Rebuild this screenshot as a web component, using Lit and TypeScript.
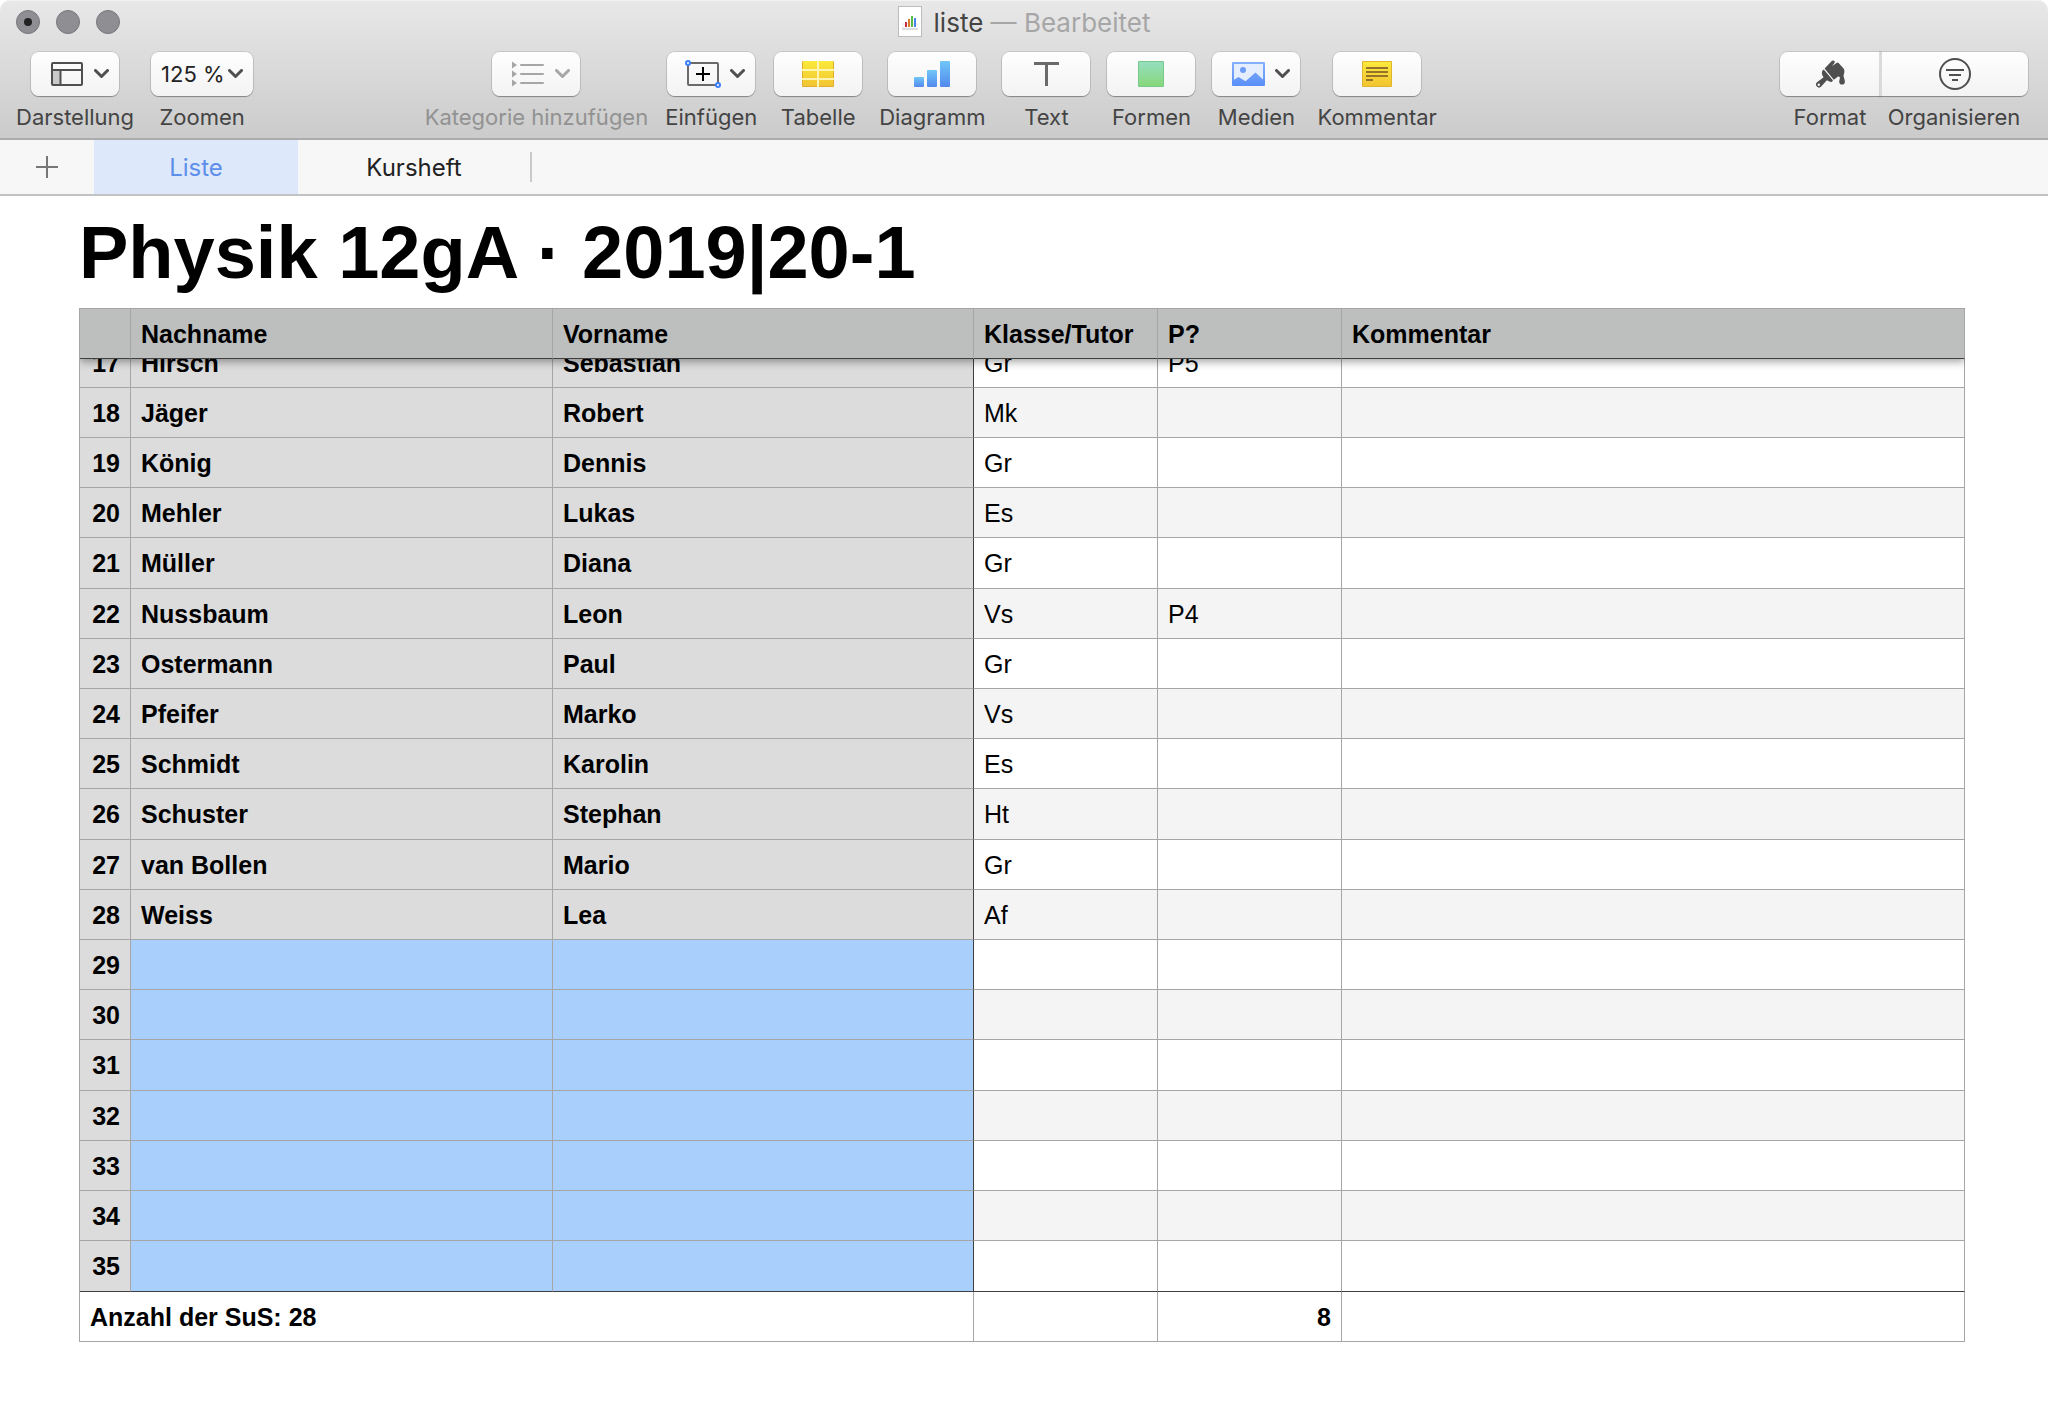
import { LitElement, html, svg, css, nothing, type TemplateResult } from "lit";
import { customElement, property, state } from "lit/decorators.js";
import { classMap } from "lit/directives/class-map.js";

type IconName =
  | "view"
  | "category"
  | "insert"
  | "table"
  | "chart"
  | "text"
  | "shape"
  | "media"
  | "comment"
  | "brush"
  | "organize";

const icons: Record<IconName, TemplateResult> = {
  view: svg`
    <rect x="2" y="12" width="7" height="15" fill="#c9c9c9" />
    <g fill="none" stroke="#4f4f4f" stroke-width="2">
      <rect x="1" y="5" width="30" height="22" rx="1" />
      <path d="M1 12H31M9.500 12V27" />
    </g>`,
  category: svg`
    <path d="M0 3.500L5 7L0 10.500ZM0 12.500L5 16L0 19.500ZM0 21.500L5 25L0 28.500Z" fill="#a6a6a6" />
    <path d="M9 7H31M9 16H31M9 25H31" stroke="#a6a6a6" stroke-width="2" stroke-linecap="round" />`,
  insert: svg`
    <rect x="1" y="5" width="30" height="22" rx="1" fill="none" stroke="#6a6a6a" stroke-width="2" />
    <path d="M9 16H23M16 9V23" stroke="#000" stroke-width="2" />
    <g fill="#fff" stroke="#3e80fa" stroke-width="2">
      <circle cx="1" cy="5" r="2" />
      <circle cx="31" cy="27" r="2" />
    </g>`,
  table: svg`
    <defs>
      <linearGradient id="g" x1="0" y1="0" x2="0" y2="1">
        <stop offset="0" stop-color="#fbea3b" /><stop offset="1" stop-color="#f2c432" />
      </linearGradient>
    </defs>
    <rect x="0" y="3" width="32" height="26" rx="1" fill="#e0ae2c" />
    <rect x="1" y="3" width="30" height="25" fill="url(#g)" />
    <path d="M0 12H32M0 21H32M16 3V29" stroke="#fff5b0" stroke-width="2" />`,
  chart: svg`
    <defs>
      <linearGradient id="g" x1="0" y1="0" x2="0" y2="1">
        <stop offset="0" stop-color="#71c6f7" /><stop offset="1" stop-color="#5189ed" />
      </linearGradient>
    </defs>
    <g fill="url(#g)">
      <rect x="-2" y="19" width="10" height="10" rx="1" />
      <rect x="11" y="12" width="10" height="17" rx="1" />
      <rect x="24" y="3" width="10" height="26" rx="1" />
    </g>`,
  text: svg`<path d="M4 4H29V7H18V28H15V7H4Z" fill="#6a6a6a" />`,
  shape: svg`
    <defs>
      <linearGradient id="g" x1="0" y1="0" x2="0" y2="1">
        <stop offset="0" stop-color="#95dfc0" /><stop offset="1" stop-color="#86d77a" />
      </linearGradient>
    </defs>
    <rect x="3" y="3" width="26" height="26" rx="1" fill="#79c98a" />
    <rect x="4" y="4" width="24" height="24" fill="url(#g)" />`,
  media: svg`
    <defs>
      <linearGradient id="g" x1="0" y1="0" x2="0" y2="1">
        <stop offset="0" stop-color="#86b0fb" /><stop offset="1" stop-color="#5a8ff8" />
      </linearGradient>
    </defs>
    <rect x="0" y="4" width="33" height="24" rx="1" fill="url(#g)" />
    <path d="M2 6H31V21.500L23.500 14.500L13.500 23.300L6.500 19L2 21.800Z" fill="#e5eeff" />
    <circle cx="11" cy="12" r="3" fill="#6d9cf8" />`,
  comment: svg`
    <defs>
      <linearGradient id="g" x1="0" y1="0" x2="0" y2="1">
        <stop offset="0" stop-color="#fbea3b" /><stop offset="1" stop-color="#f2c432" />
      </linearGradient>
    </defs>
    <rect x="1" y="3" width="30" height="26" rx="1" fill="#e0b52e" />
    <rect x="2" y="4" width="28" height="24" fill="url(#g)" />
    <path d="M5 10H27M5 14H27M5 18H27M5 22H12" stroke="#94722a" stroke-width="2" />`,
  brush: svg`
    <g fill="#4f4f4f">
      <path d="M10.600 10.400L18 2.800Q19.200 1.900 20.500 3Q21.300 4 20.300 5.200L18 8.200L22.800 4.800Q23.800 4.300 24.600 5.100L29.600 10.500Q30.900 12.200 30.300 14.500L29.500 17.800L30.800 22.800A2.900 2.900 0 1 1 25.300 22.800L26 19.500L24.400 18.200L19.800 21.800Z" />
      <path d="M8.300 12.700L9.800 11.500L19 22.600L17.700 23.900Q15.500 24 12.900 22.200L7.200 28.600A3 3 0 1 1 3 24.200L9.600 19.300Q7 16 8.300 12.700Z" />
    </g>
    <circle cx="4.800" cy="26.800" r="1.200" fill="#f8f8f8" />`,
  organize: svg`
    <g fill="none" stroke="#4f4f4f" stroke-width="2">
      <circle cx="16" cy="16" r="15" />
      <path d="M7 12H25M10 17H22M13 22H19" />
    </g>`,
};

@customElement("tool-icon")
export class ToolIcon extends LitElement {
  @property() name: IconName = "view";

  static styles = css`
    :host {
      display: block;
      flex: none;
    }
    .glyph {
      display: block;
      overflow: visible;
    }
  `;

  render() {
    return html`<svg class="glyph" width="32" height="32" viewBox="0 0 32 32" aria-hidden="true">
      ${icons[this.name]}
    </svg>`;
  }
}

interface Tool {
  label: string;
  icon: IconName;
  menu?: boolean;
  disabled?: boolean;
}

const contentTools: Tool[] = [
  { label: "Kategorie hinzufügen", icon: "category", menu: true, disabled: true },
  { label: "Einfügen", icon: "insert", menu: true },
  { label: "Tabelle", icon: "table" },
  { label: "Diagramm", icon: "chart" },
  { label: "Text", icon: "text" },
  { label: "Formen", icon: "shape" },
  { label: "Medien", icon: "media", menu: true },
  { label: "Kommentar", icon: "comment" },
];

const chevron = html`<svg class="chevron" width="15" height="10" viewBox="0 0 15 10" aria-hidden="true">
  <path d="M1.500 1.500L7.500 7.500L13.500 1.500" fill="none" stroke="currentColor" stroke-width="3" stroke-linecap="round" stroke-linejoin="round" />
</svg>`;

@customElement("app-toolbar")
export class AppToolbar extends LitElement {
  static styles = css`
    :host {
      display: block;
      color: #444;
      font-family: Inter, "Liberation Sans", sans-serif;
      border-radius: 10px 10px 0 0;
      border-bottom: 2px solid #acacac;
      background: linear-gradient(#e8e8e8, #cbcbcb);
      box-shadow: inset 0 1px 0 #f3f3f3;
    }
    .titlebar {
      display: grid;
      grid-template-columns: 1fr auto 1fr;
      align-items: center;
      height: 44px;
      padding: 0 16px;
    }
    .lights {
      display: flex;
      gap: 16px;
    }
    .light {
      display: grid;
      place-items: center;
      box-sizing: border-box;
      width: 24px;
      height: 24px;
      padding: 0;
      border: 1px solid #77767b;
      border-radius: 50%;
      background: #8f8e93;
    }
    .unsaved {
      width: 8px;
      height: 8px;
      border-radius: 50%;
      background: #222;
    }
    .title {
      display: flex;
      align-items: center;
      gap: 12px;
      font-size: 26px;
      line-height: 32px;
      white-space: pre;
    }
    .name {
      padding-top: 2px;
    }
    .state {
      color: #a6a6a6;
    }
    .tools {
      display: flex;
      padding: 8px 20px 7px 16px;
    }
    .group {
      display: flex;
      gap: 17px;
    }
    .near {
      flex: 1;
    }
    .far {
      flex: 2;
    }
    .item {
      display: flex;
      flex-direction: column;
      align-items: center;
      gap: 7px;
      padding: 0;
      border: 0;
      background: none;
      color: inherit;
      font: inherit;
      font-size: 22px;
      line-height: 28px;
      white-space: nowrap;
    }
    .item:disabled {
      color: #929292;
    }
    .face {
      display: flex;
      align-items: center;
      justify-content: center;
      box-sizing: border-box;
      min-width: 88px;
      height: 44px;
      border-radius: 8px;
      background: linear-gradient(#fefefe, #f3f3f3);
      box-shadow: 0 0 0 1px rgba(0, 0, 0, 0.1), 0 1px 1px rgba(0, 0, 0, 0.3);
    }
    .menu {
      justify-content: space-between;
      padding: 0 10px 0 20px;
    }
    .chevron {
      flex: none;
      color: #4f4f4f;
    }
    .item:disabled .chevron {
      color: #a6a6a6;
    }
    .zoom {
      gap: 4px;
      width: 102px;
      padding: 0 10px;
      justify-content: space-between;
    }
    .level {
      appearance: none;
      flex: 1;
      min-width: 0;
      padding: 0;
      border: 0;
      background: none;
      color: #222;
      font: inherit;
    }
    .segments {
      display: flex;
    }
    .segments .face {
      width: 100px;
      border-radius: 8px 0 0 8px;
    }
    .segments .last .face {
      width: 148px;
      border-left: 2px solid #dadada;
      border-radius: 0 8px 8px 0;
    }
  `;

  private tool(t: Tool) {
    return html`<button class="item" type="button" ?disabled=${t.disabled} aria-haspopup=${t.menu ? "menu" : nothing}>
      <span class=${classMap({ face: true, menu: !!t.menu })}>
        <tool-icon name=${t.icon}></tool-icon>
        ${t.menu ? chevron : nothing}
      </span>
      <span>${t.label}</span>
    </button>`;
  }

  render() {
    return html`
      <header class="titlebar">
        <div class="lights">
          <button class="light" type="button" aria-label="Schließen"><span class="unsaved"></span></button>
          <button class="light" type="button" aria-label="Minimieren"></button>
          <button class="light" type="button" aria-label="Vergrößern"></button>
        </div>
        <div class="title">
          <svg width="24" height="32" viewBox="0 0 24 32" aria-hidden="true">
            <rect x="0.500" y="0.500" width="23" height="30" fill="#fff" stroke="#bcbcbc" />
            <path d="M4 18H20M4 21H7" stroke="#e4e4e4" />
            <path d="M4 23H20" stroke="#bbb" />
            <path d="M8 16V21" stroke="#c8303c" stroke-width="2" />
            <path d="M11 13V21" stroke="#dd7a2c" stroke-width="2" />
            <path d="M14 10V21" stroke="#59b947" stroke-width="2" />
            <path d="M17 12V21" stroke="#4a84ea" stroke-width="2" />
          </svg>
          <span class="name">liste<span class="state"> — Bearbeitet</span></span>
        </div>
      </header>
      <div class="tools" role="toolbar">
        <div class="group">
          ${this.tool({ label: "Darstellung", icon: "view", menu: true })}
          <label class="item">
            <span class="face zoom">
              <select class="level">
                <option>125 %</option>
              </select>
              ${chevron}
            </span>
            <span>Zoomen</span>
          </label>
        </div>
        <div class="near"></div>
        <div class="group">${contentTools.map((t) => this.tool(t))}</div>
        <div class="far"></div>
        <div class="segments">
          <button class="item" type="button">
            <span class="face"><tool-icon name="brush"></tool-icon></span>
            <span>Format</span>
          </button>
          <button class="item last" type="button">
            <span class="face"><tool-icon name="organize"></tool-icon></span>
            <span>Organisieren</span>
          </button>
        </div>
      </div>
    `;
  }
}

@customElement("sheet-tabs")
export class SheetTabs extends LitElement {
  @state() private active = "Liste";

  static styles = css`
    :host {
      display: flex;
      align-items: stretch;
      height: 54px;
      border-bottom: 2px solid #c2c2c2;
      background: #f7f7f7;
      font-family: Inter, "Liberation Sans", sans-serif;
    }
    .add,
    .tab {
      padding: 0;
      border: 0;
      background: none;
      color: #222;
      font: inherit;
      font-size: 24px;
      line-height: 28px;
    }
    .add {
      display: grid;
      place-items: center;
      width: 94px;
    }
    .tab {
      width: 232px;
      padding-top: 2px;
    }
    .active {
      width: 204px;
      background: #dde8fb;
      color: #5c8eea;
    }
    .divider {
      align-self: center;
      width: 2px;
      height: 30px;
      background: #cacaca;
    }
  `;

  render() {
    return html`
      <button class="add" type="button" aria-label="Blatt hinzufügen">
        <svg width="22" height="22" viewBox="0 0 22 22" aria-hidden="true">
          <path d="M0 11H22M11 0V22" stroke="#777" stroke-width="2" />
        </svg>
      </button>
      ${["Liste", "Kursheft"].map(
        (name) => html`<button
          type="button"
          class=${classMap({ tab: true, active: name === this.active })}
          aria-pressed=${name === this.active}
          @click=${() => (this.active = name)}
        >
          ${name}
        </button>`
      )}
      <span class="divider"></span>
    `;
  }
}

interface Student {
  nr: number;
  last?: string;
  first?: string;
  tutor?: string;
  exam?: string;
}

const students: Student[] = [
  { nr: 17, last: "Hirsch", first: "Sebastian", tutor: "Gr", exam: "P5" },
  { nr: 18, last: "Jäger", first: "Robert", tutor: "Mk" },
  { nr: 19, last: "König", first: "Dennis", tutor: "Gr" },
  { nr: 20, last: "Mehler", first: "Lukas", tutor: "Es" },
  { nr: 21, last: "Müller", first: "Diana", tutor: "Gr" },
  { nr: 22, last: "Nussbaum", first: "Leon", tutor: "Vs", exam: "P4" },
  { nr: 23, last: "Ostermann", first: "Paul", tutor: "Gr" },
  { nr: 24, last: "Pfeifer", first: "Marko", tutor: "Vs" },
  { nr: 25, last: "Schmidt", first: "Karolin", tutor: "Es" },
  { nr: 26, last: "Schuster", first: "Stephan", tutor: "Ht" },
  { nr: 27, last: "van Bollen", first: "Mario", tutor: "Gr" },
  { nr: 28, last: "Weiss", first: "Lea", tutor: "Af" },
  ...[29, 30, 31, 32, 33, 34, 35].map((nr) => ({ nr })),
];

@customElement("course-sheet")
export class CourseSheet extends LitElement {
  static styles = css`
    :host {
      display: block;
      padding: 17px 83px 76px 79px;
      background: #fff;
      color: #000;
      font-family: "Liberation Sans", Arial, sans-serif;
    }
    .heading {
      margin: 0 0 15px;
      font-size: 74px;
      line-height: 80px;
      font-weight: bold;
    }
    .grid {
      width: 100%;
      table-layout: fixed;
      border-collapse: separate;
      border-spacing: 0;
      border: solid #a6a6a6;
      border-width: 1px 0 0 1px;
      font-size: 25px;
      line-height: 29px;
    }
    .c-nr {
      width: 51px;
    }
    .c-last {
      width: 422px;
    }
    .c-first {
      width: 421px;
    }
    .c-short {
      width: 184px;
    }
    th,
    td {
      box-sizing: border-box;
      height: 50px;
      padding: 1px 10px 0;
      border: solid #a6a6a6;
      border-width: 0 1px 1px 0;
      text-align: left;
      vertical-align: middle;
      white-space: nowrap;
    }
    .head {
      position: relative;
      z-index: 1;
      box-shadow: 0 3px 8px rgba(0, 0, 0, 0.35);
      clip-path: inset(0 0 -12px 0);
    }
    .head th {
      padding-top: 2px;
      border-bottom-color: #3f3f3f;
      background: #bdbfbe;
    }
    .row .nr,
    .row .name {
      background: #dcdcdc;
      font-weight: bold;
    }
    .row .nr {
      padding: 1px 10px 0 0;
      text-align: right;
    }
    .row .pivot {
      border-right-color: #3f3f3f;
    }
    .row.selected .name {
      background: #a9cffc;
    }
    .row.even {
      background: #f4f4f4;
    }
    .row:nth-child(5n) td,
    .row:last-child td {
      height: 51px;
    }
    .row:last-child > * {
      border-bottom-color: #3f3f3f;
    }
    .row.scrolled > * {
      height: 29px;
      padding-top: 0;
      padding-bottom: 0;
    }
    .clip {
      display: flex;
      flex-direction: column;
      justify-content: flex-end;
      box-sizing: border-box;
      height: 28px;
      padding-bottom: 9px;
      overflow: hidden;
    }
    .foot td,
    .foot th {
      font-weight: bold;
    }
    .foot .count {
      text-align: right;
    }
  `;

  private row(s: Student, index: number) {
    // The first visible row is partly scrolled under the header.
    const scrolled = index === 0;
    const cell = (value: string | number = "") => (scrolled ? html`<div class="clip">${value}</div>` : value);
    return html`<tr class=${classMap({ row: true, scrolled, even: s.nr % 2 === 0, selected: !s.last })}>
      <th class="nr" scope="row">${cell(s.nr)}</th>
      <td class="name">${cell(s.last)}</td>
      <td class="name pivot">${cell(s.first)}</td>
      <td>${cell(s.tutor)}</td>
      <td>${cell(s.exam)}</td>
      <td></td>
    </tr>`;
  }

  render() {
    return html`
      <h1 class="heading">Physik 12gA · 2019|20-1</h1>
      <table class="grid">
        <colgroup>
          <col class="c-nr" />
          <col class="c-last" />
          <col class="c-first" />
          <col class="c-short" />
          <col class="c-short" />
          <col />
        </colgroup>
        <thead class="head">
          <tr>
            <th></th>
            <th scope="col">Nachname</th>
            <th scope="col">Vorname</th>
            <th scope="col">Klasse/Tutor</th>
            <th scope="col">P?</th>
            <th scope="col">Kommentar</th>
          </tr>
        </thead>
        <tbody>
          ${students.map((s, i) => this.row(s, i))}
        </tbody>
        <tfoot class="foot">
          <tr>
            <th colspan="3" scope="row">Anzahl der SuS: 28</th>
            <td></td>
            <td class="count">8</td>
            <td></td>
          </tr>
        </tfoot>
      </table>
    `;
  }
}

@customElement("app-root")
export class AppRoot extends LitElement {
  static styles = css`
    :host {
      display: block;
      min-height: 100vh;
      background: #fff;
    }
  `;

  render() {
    return html`
      <app-toolbar></app-toolbar>
      <sheet-tabs></sheet-tabs>
      <course-sheet></course-sheet>
    `;
  }
}
